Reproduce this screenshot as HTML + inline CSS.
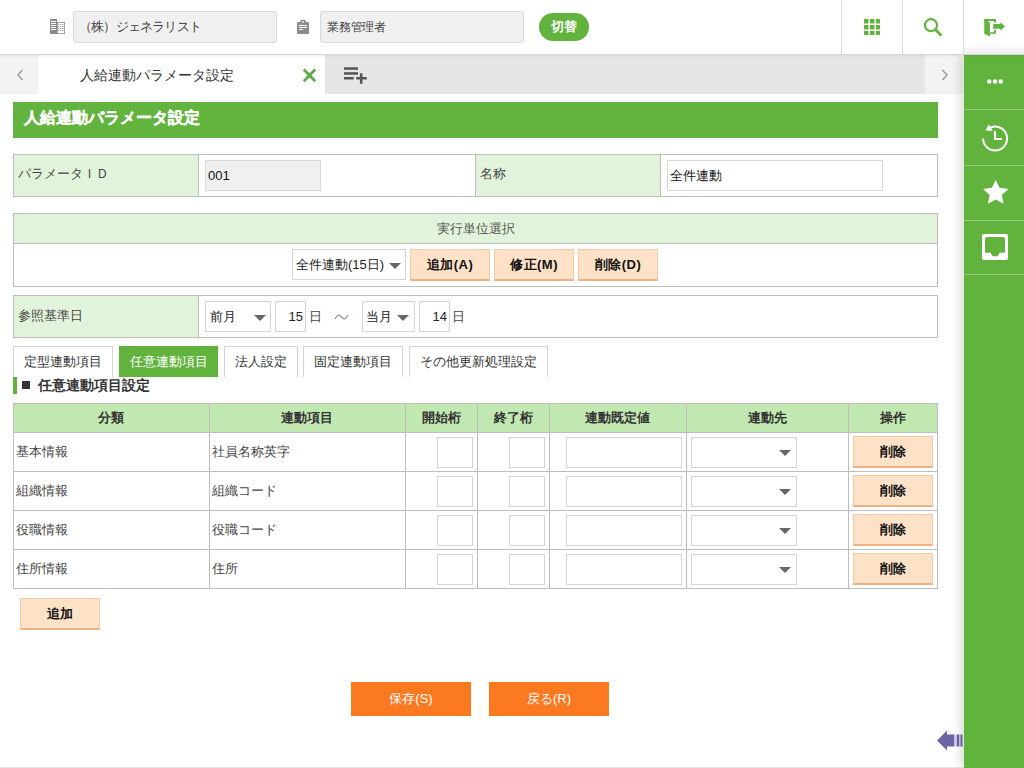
<!DOCTYPE html>
<html lang="ja">
<head>
<meta charset="utf-8">
<style>
*{box-sizing:border-box;margin:0;padding:0}
html,body{width:1024px;height:768px;overflow:hidden;background:#fff}
body{font-family:"Liberation Sans",sans-serif;font-size:13px;color:#333;position:relative}
.a{position:absolute}
#hdr{left:0;top:0;width:1024px;height:55px;background:#fff;border-bottom:1px solid #d6d6d6;box-shadow:0 1px 3px rgba(0,0,0,.08);z-index:3}
.hin{height:32px;top:11px;background:#f0f0f0;border:1px solid #d9d9d9;border-radius:3px;padding-left:6px;line-height:30px;font-size:12.5px;color:#444}
.sep{top:0;width:1px;height:54px;background:#ddd}
#tabbar{left:0;top:55px;width:964px;height:39px;background:#e6e6e6}
#sidebar{left:964px;top:55px;width:60px;height:713px;background:#62b33e;z-index:2;box-shadow:-1px 0 0 #dbeed3,-4px 0 9px rgba(0,0,0,.13)}
.sbsep{left:0;width:60px;height:1px;background:rgba(255,255,255,.35)}
#title{left:13px;top:102px;width:925px;height:36px;background:#63b33f;color:#fff;font-weight:bold;font-size:16px;line-height:32px;padding-left:11px;-webkit-text-stroke:0.25px #fff}
.bx{border:1px solid #bdbdbd}
.lbl{background:#e2f3db}
.inp{background:#fff;border:1px solid #d5d5d5}
.btn{background:#fde2c7;border:1px solid #f1c9a3;border-bottom:2px solid #efb083;font-weight:bold;text-align:center;color:#111}
.obtn{background:#fb7a21;color:#fff;text-align:center;line-height:34px;font-size:13px}
table{border-collapse:collapse}
.th{top:403px;height:29px;line-height:29px;text-align:center;font-weight:bold;font-size:13px;color:#333}
.td{height:39px;line-height:39px;font-size:13px;color:#444}
.tab{top:346px;height:31px;border:1px solid #d5d5d5;border-bottom:none;background:#fff;text-align:center;line-height:30px;font-size:13px;color:#333}
.tab.on{background:#62b33e;border-color:#62b33e;color:#fff}
</style>
</head>
<body>
<div id="hdr" class="a">
  <svg class="a" style="left:46px;top:15px" width="24" height="24" viewBox="0 0 24 24"><rect x="4" y="4" width="7" height="15" fill="#8c8c8c"/><g fill="#fff"><rect x="5" y="6" width="5" height="1"/><rect x="5" y="8" width="5" height="1"/><rect x="5" y="10" width="5" height="1"/><rect x="5" y="12" width="5" height="1"/><rect x="5" y="14" width="5" height="1"/></g><rect x="11" y="7" width="8" height="12" fill="#8c8c8c"/><rect x="11.8" y="7.8" width="6.4" height="10.4" fill="#fff"/><g fill="#8c8c8c"><rect x="12.3" y="9" width="1" height="1"/><rect x="14.3" y="9" width="1" height="1"/><rect x="16.3" y="9" width="1" height="1"/><rect x="12.3" y="11" width="1" height="1"/><rect x="14.3" y="11" width="1" height="1"/><rect x="16.3" y="11" width="1" height="1"/><rect x="12.3" y="13" width="1" height="1"/><rect x="14.3" y="13" width="1" height="1"/><rect x="16.3" y="13" width="1" height="1"/><rect x="12.3" y="15" width="1" height="1"/><rect x="14.3" y="15" width="1" height="1"/><rect x="16.3" y="15" width="1" height="1"/></g></svg>
  <div class="a hin" style="left:73px;width:204px;letter-spacing:-0.8px;padding-left:5px">（株）ジェネラリスト</div>
  <svg class="a" style="left:292px;top:15px" width="24" height="24" viewBox="0 0 24 24"><path fill="#8c8c8c" fill-rule="evenodd" d="M6 7 H8.3 V6.3 A1.5 1.5 0 0 1 9.8 4.8 H12.4 A1.5 1.5 0 0 1 13.9 6.3 V7 H16 A1 1 0 0 1 17 8 V18 A1 1 0 0 1 16 19 H6 A1 1 0 0 1 5 18 V8 A1 1 0 0 1 6 7 Z M10 6.2 V7.6 H12 V6.2 Z M7 10 V11 H15 V10 Z M7 12 V13 H15 V12 Z M7 14 V15 H11 V14 Z"/></svg>
  <div class="a hin" style="left:320px;width:204px;padding-left:6px;font-size:12px;letter-spacing:-0.2px">業務管理者</div>
  <div class="a" style="left:539px;top:13px;width:50px;height:28px;border-radius:14px;background:#62b33e;color:#fff;font-weight:bold;text-align:center;line-height:28px;font-size:12.5px">切替</div>
  <div class="a" style="left:964px;top:44px;width:60px;height:10px;background:linear-gradient(rgba(0,0,0,0),rgba(0,0,0,.07))"></div>
  <div class="a sep" style="left:841px"></div>
  <div class="a sep" style="left:902px"></div>
  <div class="a sep" style="left:963px"></div>
  <svg class="a" style="left:864px;top:19px" width="16" height="16" viewBox="0 0 16 16" fill="#62b33e"><rect x="0" y="0" width="4.5" height="4.5"/><rect x="6" y="0" width="4.5" height="4.5"/><rect x="12" y="0" width="4.5" height="4.5"/><rect x="0" y="6" width="4.5" height="4.5"/><rect x="6" y="6" width="4.5" height="4.5"/><rect x="12" y="6" width="4.5" height="4.5"/><rect x="0" y="12" width="4.5" height="4.5"/><rect x="6" y="12" width="4.5" height="4.5"/><rect x="12" y="12" width="4.5" height="4.5"/></svg>
  <svg class="a" style="left:923px;top:17px" width="20" height="20" viewBox="0 0 20 20"><circle cx="8" cy="8.2" r="6" fill="none" stroke="#62b33e" stroke-width="2.2"/><line x1="12.4" y1="12.6" x2="17.5" y2="17.7" stroke="#62b33e" stroke-width="2.8" stroke-linecap="round"/></svg>
  <svg class="a" style="left:978px;top:12px" width="32" height="32" viewBox="0 0 32 32" fill="#62b33e"><path d="M6.25 7.1 H17.9 V10.6 H16 V9 H6.25 Z"/><path d="M11.9 20.2 H16 V18.1 H17.9 V21.7 H11.9 Z"/><path d="M6.25 7.1 L11.9 10.6 V24.6 L6.25 21.7 Z"/><path d="M15.2 12.1 H22.5 V10 L26.9 14.4 L22.5 18.75 V16.7 H15.2 Z"/></svg>
</div>

<div id="tabbar" class="a">
  <div class="a" style="left:0;top:0;width:38px;height:39px;background:#f3f3f3">
    <svg width="8" height="12" viewBox="0 0 8 12" style="position:absolute;left:16px;top:14px"><path d="M6.5 1 L2 6 L6.5 11" fill="none" stroke="#999" stroke-width="1.4"/></svg>
  </div>
  <div class="a" style="left:38px;top:0;width:287px;height:39px;background:#fff">
    <div class="a" style="left:42px;top:0;line-height:40px;font-size:14px;color:#333">人給連動パラメータ設定</div>
    <svg class="a" style="left:264px;top:13px" width="15" height="15" viewBox="0 0 15 15"><path d="M1.8 1.5 L13.2 13.2 M13.2 1.5 L1.8 13.2" stroke="#5fa844" stroke-width="2.7"/></svg>
  </div>
  <svg class="a" style="left:343px;top:12px" width="25" height="18" viewBox="0 0 25 18" fill="#555"><rect x="1" y="0.3" width="14" height="2.5"/><rect x="1" y="5.2" width="14" height="2.5"/><rect x="1" y="10" width="9.7" height="2.5"/><rect x="16.9" y="6.3" width="2.6" height="10.4"/><rect x="13.2" y="10" width="10.6" height="2.5"/></svg>
  <div class="a" style="left:925px;top:0;width:39px;height:39px;background:#f3f3f3">
    <svg width="8" height="12" viewBox="0 0 8 12" style="position:absolute;left:16px;top:14px"><path d="M1.5 1 L6 6 L1.5 11" fill="none" stroke="#999" stroke-width="1.4"/></svg>
  </div>
</div>

<div id="sidebar" class="a">
  <svg class="a" style="left:23px;top:23.5px" width="16" height="5" viewBox="0 0 16 5" fill="#fff"><circle cx="2.3" cy="2.5" r="2.2"/><circle cx="8" cy="2.5" r="2.2"/><circle cx="13.7" cy="2.5" r="2.2"/></svg>
  <svg class="a" style="left:17px;top:69px" width="28" height="28" viewBox="0 0 28 28"><path d="M2.1 14.5 A12 12 0 1 0 8.1 4.1" fill="none" stroke="#fff" stroke-width="2"/><path d="M7.8 0.6 L4.5 6.6 L11.8 6.9 Z" fill="#fff"/><path d="M14 7 V15 H21" fill="none" stroke="#fff" stroke-width="2.1"/></svg>
  <svg class="a" style="left:18px;top:124px" width="28" height="28" viewBox="0 0 28 28"><path d="M13.70 0.70 L17.46 8.82 L26.35 9.89 L19.79 15.98 L21.52 24.76 L13.70 20.40 L5.88 24.76 L7.61 15.98 L1.05 9.89 L9.94 8.82 Z" fill="#fff"/></svg>
  <svg class="a" style="left:18px;top:179px" width="26" height="26" viewBox="0 0 26 26"><path fill="#fff" fill-rule="evenodd" d="M2 0 H24 A2 2 0 0 1 26 2 V24 A2 2 0 0 1 24 26 H2 A2 2 0 0 1 0 24 V2 A2 2 0 0 1 2 0 Z M5 3 H21 A2 2 0 0 1 23 5 V18.7 H17.4 Q17 22.6 13.2 22.6 Q9.4 22.6 8.9 18.7 H3 V5 A2 2 0 0 1 5 3 Z"/></svg>
  <div class="a sbsep" style="top:54px"></div>
  <div class="a sbsep" style="top:110px"></div>
  <div class="a sbsep" style="top:165px"></div>
  <div class="a sbsep" style="top:219px"></div>
</div>

<div id="title" class="a">人給連動パラメータ設定</div>


<!-- table1 -->
<div class="a bx" style="left:13px;top:154px;width:925px;height:43px">
  <div class="a lbl" style="left:0;top:0;width:185px;height:41px;border-right:1px solid #bdbdbd"></div>
  <div class="a" style="left:4px;top:0;line-height:38px;font-size:13px;color:#444">パラメータＩＤ</div>
  <div class="a" style="left:191px;top:5px;width:116px;height:31px;background:#f0f0f0;border:1px solid #d8d8d8;line-height:29px;padding-left:2px;font-size:13px;color:#111">001</div>
  <div class="a lbl" style="left:461px;top:0;width:186px;height:41px;border-left:1px solid #bdbdbd;border-right:1px solid #bdbdbd"></div>
  <div class="a" style="left:466px;top:0;line-height:38px;font-size:13px;color:#444">名称</div>
  <div class="a" style="left:653px;top:5px;width:216px;height:31px;background:#fff;border:1px solid #d8d8d8;line-height:29px;padding-left:2px;font-size:13px;color:#111">全件連動</div>
</div>

<!-- table2 -->
<div class="a bx" style="left:13px;top:213px;width:925px;height:74px">
  <div class="a lbl" style="left:0;top:0;width:923px;height:30px;border-bottom:1px solid #bdbdbd;text-align:center;line-height:29px;font-size:13px;color:#555">実行単位選択</div>
  <div class="a inp" style="left:278px;top:35px;width:114px;height:31px;line-height:29px;padding-left:3px;font-size:13px;color:#222">全件連動(15日)</div>
  <svg class="a" style="left:374.5px;top:49px" width="12" height="6" viewBox="0 0 12 6"><path d="M0 0 H12 L6 6 Z" fill="#666"/></svg>
  <div class="a btn" style="left:396px;top:35px;width:80px;height:32px;line-height:29px;font-size:13px;letter-spacing:.5px">追加(A)</div>
  <div class="a btn" style="left:480px;top:35px;width:80px;height:32px;line-height:29px;font-size:13px;letter-spacing:.5px">修正(M)</div>
  <div class="a btn" style="left:564px;top:35px;width:80px;height:32px;line-height:29px;font-size:13px;letter-spacing:.5px">削除(D)</div>
</div>

<!-- table3 -->
<div class="a bx" style="left:13px;top:295px;width:925px;height:43px">
  <div class="a lbl" style="left:0;top:0;width:185px;height:41px;border-right:1px solid #bdbdbd"></div>
  <div class="a" style="left:4px;top:0;line-height:40px;font-size:13px;color:#444">参照基準日</div>
  <div class="a inp" style="left:191px;top:5px;width:66px;height:31px;line-height:29px;padding-left:4px;font-size:13px;color:#222">前月</div>
  <svg class="a" style="left:240px;top:19px" width="12" height="6" viewBox="0 0 12 6"><path d="M0 0 H12 L6 6 Z" fill="#666"/></svg>
  <div class="a inp" style="left:261px;top:5px;width:31px;height:31px;line-height:29px;padding-right:2px;text-align:right;font-size:13px;color:#222">15</div>
  <div class="a" style="left:295px;top:0;line-height:42px;font-size:13px;color:#444">日</div>
  <svg class="a" style="left:320px;top:16px" width="16" height="10" viewBox="0 0 16 10"><path d="M1.3 6.8 C3.3 2.3 5.8 2.3 7.5 5 C9.2 7.7 11.7 7.7 13.8 3.3" fill="none" stroke="#555" stroke-width="1"/></svg>
  <div class="a inp" style="left:348px;top:5px;width:53px;height:31px;line-height:29px;padding-left:3px;font-size:13px;color:#222">当月</div>
  <svg class="a" style="left:383px;top:19px" width="12" height="6" viewBox="0 0 12 6"><path d="M0 0 H12 L6 6 Z" fill="#666"/></svg>
  <div class="a inp" style="left:405px;top:5px;width:31px;height:31px;line-height:29px;padding-right:2px;text-align:right;font-size:13px;color:#222">14</div>
  <div class="a" style="left:438px;top:0;line-height:42px;font-size:13px;color:#444">日</div>
</div>

<!-- tabs -->
<div class="a tab" style="left:13px;width:100px">定型連動項目</div>
<div class="a tab on" style="left:119px;width:99px">任意連動項目</div>
<div class="a tab" style="left:224px;width:74px">法人設定</div>
<div class="a tab" style="left:303px;width:100px">固定連動項目</div>
<div class="a tab" style="left:409px;width:139px">その他更新処理設定</div>

<div class="a" style="left:13px;top:377px;width:4px;height:17px;background:#62b33e"></div>
<div class="a" style="left:22px;top:381px;width:8px;height:8px;background:#333"></div>
<div class="a" style="left:38px;top:375px;line-height:20px;font-size:14px;font-weight:bold;color:#333">任意連動項目設定</div>

<!-- grid -->
<div class="a" style="left:13px;top:403px;width:925px;height:186px;border:1px solid #bdbdbd"></div>
<div class="a" style="left:14px;top:404px;width:923px;height:28px;background:#c2e8b2"></div>
<div class="a th" style="left:13px;width:196px">分類</div>
<div class="a th" style="left:209px;width:196px">連動項目</div>
<div class="a th" style="left:405px;width:72px">開始桁</div>
<div class="a th" style="left:477px;width:72px">終了桁</div>
<div class="a th" style="left:549px;width:137px">連動既定値</div>
<div class="a th" style="left:686px;width:162px">連動先</div>
<div class="a th" style="left:848px;width:89px">操作</div>
<div class="a" style="left:209px;top:403px;width:1px;height:186px;background:#bdbdbd"></div>
<div class="a" style="left:405px;top:403px;width:1px;height:186px;background:#bdbdbd"></div>
<div class="a" style="left:477px;top:403px;width:1px;height:186px;background:#bdbdbd"></div>
<div class="a" style="left:549px;top:403px;width:1px;height:186px;background:#bdbdbd"></div>
<div class="a" style="left:686px;top:403px;width:1px;height:186px;background:#bdbdbd"></div>
<div class="a" style="left:848px;top:403px;width:1px;height:186px;background:#bdbdbd"></div>
<div class="a" style="left:13px;top:432px;width:925px;height:1px;background:#bdbdbd"></div>
<div class="a" style="left:13px;top:471px;width:925px;height:1px;background:#bdbdbd"></div>
<div class="a" style="left:13px;top:510px;width:925px;height:1px;background:#bdbdbd"></div>
<div class="a" style="left:13px;top:549px;width:925px;height:1px;background:#bdbdbd"></div>
<div class="a td" style="left:16px;top:432px">基本情報</div>
<div class="a td" style="left:212px;top:432px">社員名称英字</div>
<div class="a inp" style="left:437px;top:437px;width:36px;height:31px"></div>
<div class="a inp" style="left:509px;top:437px;width:36px;height:31px"></div>
<div class="a inp" style="left:566px;top:437px;width:116px;height:31px"></div>
<div class="a inp" style="left:691px;top:437px;width:106px;height:31px"></div>
<svg class="a" style="left:779px;top:450px" width="12" height="6" viewBox="0 0 12 6"><path d="M0 0 H12 L6 6 Z" fill="#666"/></svg>
<div class="a btn" style="left:853px;top:436px;width:80px;height:32px;line-height:29px;font-size:13px">削除</div>
<div class="a td" style="left:16px;top:471px">組織情報</div>
<div class="a td" style="left:212px;top:471px">組織コード</div>
<div class="a inp" style="left:437px;top:476px;width:36px;height:31px"></div>
<div class="a inp" style="left:509px;top:476px;width:36px;height:31px"></div>
<div class="a inp" style="left:566px;top:476px;width:116px;height:31px"></div>
<div class="a inp" style="left:691px;top:476px;width:106px;height:31px"></div>
<svg class="a" style="left:779px;top:489px" width="12" height="6" viewBox="0 0 12 6"><path d="M0 0 H12 L6 6 Z" fill="#666"/></svg>
<div class="a btn" style="left:853px;top:475px;width:80px;height:32px;line-height:29px;font-size:13px">削除</div>
<div class="a td" style="left:16px;top:510px">役職情報</div>
<div class="a td" style="left:212px;top:510px">役職コード</div>
<div class="a inp" style="left:437px;top:515px;width:36px;height:31px"></div>
<div class="a inp" style="left:509px;top:515px;width:36px;height:31px"></div>
<div class="a inp" style="left:566px;top:515px;width:116px;height:31px"></div>
<div class="a inp" style="left:691px;top:515px;width:106px;height:31px"></div>
<svg class="a" style="left:779px;top:528px" width="12" height="6" viewBox="0 0 12 6"><path d="M0 0 H12 L6 6 Z" fill="#666"/></svg>
<div class="a btn" style="left:853px;top:514px;width:80px;height:32px;line-height:29px;font-size:13px">削除</div>
<div class="a td" style="left:16px;top:549px">住所情報</div>
<div class="a td" style="left:212px;top:549px">住所</div>
<div class="a inp" style="left:437px;top:554px;width:36px;height:31px"></div>
<div class="a inp" style="left:509px;top:554px;width:36px;height:31px"></div>
<div class="a inp" style="left:566px;top:554px;width:116px;height:31px"></div>
<div class="a inp" style="left:691px;top:554px;width:106px;height:31px"></div>
<svg class="a" style="left:779px;top:567px" width="12" height="6" viewBox="0 0 12 6"><path d="M0 0 H12 L6 6 Z" fill="#666"/></svg>
<div class="a btn" style="left:853px;top:553px;width:80px;height:32px;line-height:29px;font-size:13px">削除</div>
<div class="a btn" style="left:20px;top:598px;width:80px;height:32px;line-height:29px;font-size:13px">追加</div>
<div class="a obtn" style="left:351px;top:682px;width:120px;height:34px">保存(S)</div>
<div class="a obtn" style="left:489px;top:682px;width:120px;height:34px">戻る(R)</div>
<svg class="a" style="left:937px;top:730px" width="26" height="21" viewBox="0 0 26 21"><path d="M0 10.5 L10 0.5 V4.5 H17 V16.5 H10 V20.5 Z" fill="#6b66a6"/><rect x="17" y="4.5" width="3" height="12" fill="#c9c6ea"/><rect x="20" y="4.5" width="2" height="12" fill="#6b66a6"/><rect x="22" y="4.5" width="1.5" height="12" fill="#c9c6ea"/><rect x="23.5" y="4.5" width="2" height="12" fill="#6b66a6"/></svg>
<div class="a" style="left:0;top:767px;width:963px;height:1px;background:#e5e5e5"></div>

</body>
</html>
